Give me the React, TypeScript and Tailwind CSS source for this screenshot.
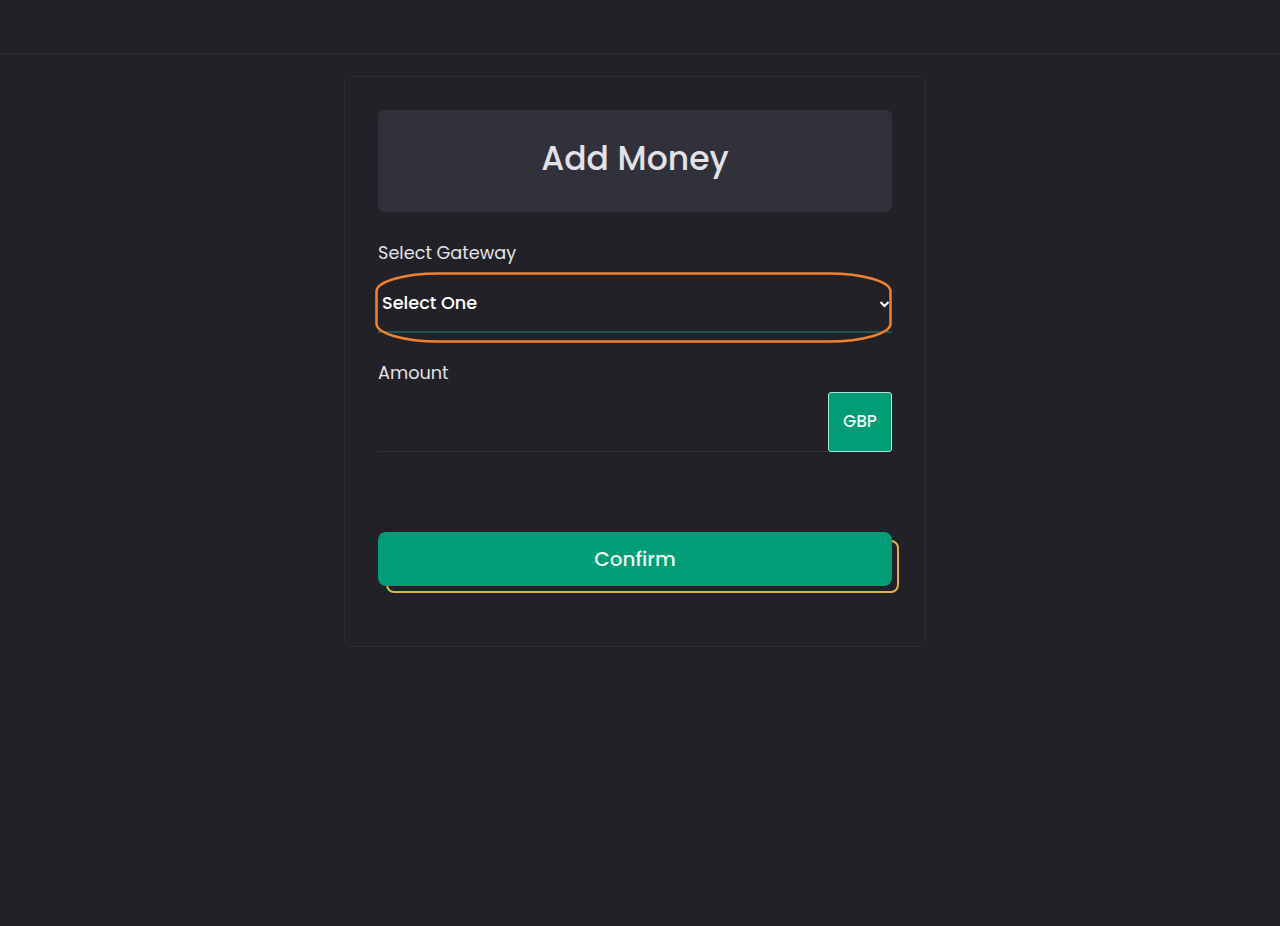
import React from "react";

export default function App() {
  return (
    <div
      className="min-h-[926px] w-full bg-[#222128] text-[#e6e6ea]"
      style={{ fontFamily: '"Poppins", "Inter", "Liberation Sans", sans-serif' }}
    >
      <div className="h-[54px] border-b border-[#2f2f39]" />
      <div className="flex justify-center pr-[10px] pt-[22px]">
        <div className="w-[582px] rounded-[8px] border border-[#2d2d37] px-[33px] pt-[33px] pb-[60px]">
          <div className="flex h-[102px] items-center justify-center rounded-[6px] bg-[#30313b] pb-[5px]">
            <h2 className="text-[33px] font-medium text-[#e2e2e8]">Add Money</h2>
          </div>

          <label className="mt-[29px] block text-[17.7px] leading-[24px] text-[#e4e4e8]">Select Gateway</label>
          <div className="relative mt-[10px]">
            <div className="flex h-[58px] items-center justify-between border-b-2 border-[#1d5550] pl-[4px] pr-[2px]">
              <span className="text-[17.7px] font-medium text-white">Select One</span>
              <svg width="11" height="8" viewBox="0 0 11 8" className="mt-[1px]">
                <path d="M1.5 2 L5.5 6 L9.5 2" fill="none" stroke="white" strokeWidth="2" />
              </svg>
            </div>
            <svg
              className="pointer-events-none absolute left-[-3px] top-[-3px]"
              width="518"
              height="72"
              viewBox="0 0 518 72"
            >
              <rect x="1.5" y="1.5" width="514" height="68" rx="62" ry="18" fill="none" stroke="#f2812f" strokeWidth="2.5" />
            </svg>
          </div>

          <label className="mt-[28px] block text-[17.7px] leading-[24px] text-[#e4e4e8]">Amount</label>
          <div className="mt-[7px] flex h-[60px]">
            <div className="flex-1 border-b border-[#30313a]" />
            <div className="flex w-[64px] items-center justify-center rounded-[3px] border border-[#a9e4d3] bg-[#009d77] text-[17px] font-medium text-[#e8fbf4]">
              GBP
            </div>
          </div>

          <div className="relative mt-[80px]">
            <div className="absolute left-[8px] top-[8px] h-[53px] w-[513px] rounded-[8px] border-2 border-[#e1b24a]" />
            <button className="relative flex h-[54px] w-full items-center justify-center rounded-[8px] bg-[#009d77] pb-[1px] text-[20px] font-medium text-[#e9fbf5]">
              Confirm
            </button>
          </div>
        </div>
      </div>
    </div>
  );
}
